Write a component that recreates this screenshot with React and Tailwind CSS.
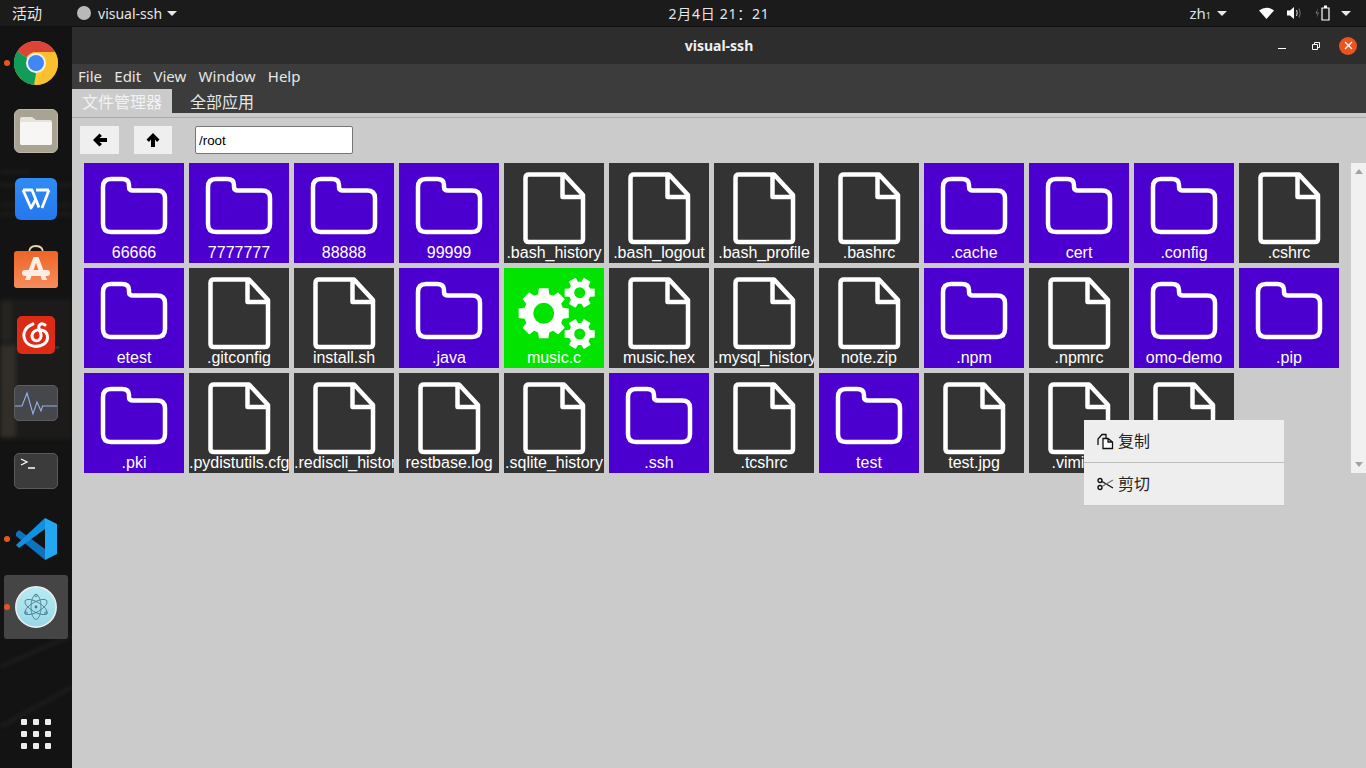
import React from 'react';

const files = [
  ['66666', 'd'], ['7777777', 'd'], ['88888', 'd'], ['99999', 'd'], ['.bash_history', 'f'], ['.bash_logout', 'f'],
  ['.bash_profile', 'f'], ['.bashrc', 'f'], ['.cache', 'd'], ['cert', 'd'], ['.config', 'd'], ['.cshrc', 'f'],
  ['etest', 'd'], ['.gitconfig', 'f'], ['install.sh', 'f'], ['.java', 'd'], ['music.c', 'x'], ['music.hex', 'f'],
  ['.mysql_history', 'f'], ['note.zip', 'f'], ['.npm', 'd'], ['.npmrc', 'f'], ['omo-demo', 'd'], ['.pip', 'd'],
  ['.pki', 'd'], ['.pydistutils.cfg', 'f'], ['.rediscli_history', 'f'], ['restbase.log', 'f'], ['.sqlite_history', 'f'], ['.ssh', 'd'],
  ['.tcshrc', 'f'], ['test', 'd'], ['test.jpg', 'f'], ['.viminfo', 'f'], ['.wget-hsts', 'f'],
];

const FolderIcon = () => (
  <svg width="100" height="80" viewBox="0 0 100 80" fill="none" stroke="white" strokeWidth="4.5">
    <path d="M27 16H38Q45 16 45 22V24Q45 27.5 49 27.5H73Q81 27.5 81 35V61Q81 69 73 69H27Q19 69 19 61V24Q19 16 27 16Z" />
  </svg>
);

const FileIcon = () => (
  <svg width="100" height="85" viewBox="0 0 100 85" fill="none" stroke="white" strokeWidth="4.5" strokeLinejoin="round">
    <path d="M25 11.5H60L79 32V76Q79 79 76 79H25Q21.5 79 21.5 76V15Q21.5 11.5 25 11.5ZM58.5 11.5V34H79" />
  </svg>
);

// builds a gear outline with a round hole
const gearPath = (cx, cy, r, hole, teeth, rootRatio) => {
  const root = r * rootRatio;
  const s = (Math.PI * 2) / teeth;
  const pts = [];
  for (let i = 0; i < teeth; i++) {
    const a = i * s;
    [[-0.36, root], [-0.24, r], [0.24, r], [0.36, root]].forEach(([k, rad]) => {
      const t = a + k * s;
      pts.push(`${(cx + Math.cos(t) * rad).toFixed(2)} ${(cy + Math.sin(t) * rad).toFixed(2)}`);
    });
  }
  return `M${pts.join('L')}ZM${cx - hole} ${cy}a${hole} ${hole} 0 1 0 ${hole * 2} 0a${hole} ${hole} 0 1 0 ${-hole * 2} 0Z`;
};

const GearsIcon = () => (
  <svg width="100" height="85" viewBox="0 0 100 85" fill="white" fillRule="evenodd">
    <path d={gearPath(39.7, 45.3, 25.5, 10.5, 8, 0.78)} />
    <path d={gearPath(75.7, 24.7, 15.5, 5.5, 6, 0.72)} />
    <path d={gearPath(75.7, 66, 15.5, 5.5, 6, 0.72)} />
  </svg>
);

const Tile = ({ name, type }) => {
  const bg = type === 'd' ? 'bg-[#4b00cf]' : type === 'x' ? 'bg-[#00e400]' : 'bg-[#333333]';
  return (
    <div className={`w-[100px] h-[100px] flex flex-col overflow-hidden ${bg}`}>
      <div className="h-[80px] shrink-0">
        {type === 'd' && <FolderIcon />}
        {type === 'f' && <FileIcon />}
        {type === 'x' && <GearsIcon />}
      </div>
      <div className="mt-auto h-[20px] leading-[20px] text-[16px] text-white text-center whitespace-nowrap">{name}</div>
    </div>
  );
};

const Caret = ({ className = '' }) => (
  <span className={`inline-block w-0 h-0 border-x-[5px] border-x-transparent border-t-[5px] border-t-[#e8e8e8] ${className}`} />
);

const TopBar = () => (
  <div className="relative z-10 h-[27px] shrink-0 grid grid-cols-[1fr_auto_1fr] items-center bg-[#1b1b1b] text-[14px] text-[#e6e6e6] border-b border-[#111]">
    <div className="flex items-center">
      <span className="ml-[12px] text-[15px]">活动</span>
      <span className="ml-[35px] w-[14px] h-[14px] rounded-full bg-[#b9b9b9]" />
      <span className="ml-[7px]">visual-ssh</span>
      <Caret className="ml-[5px]" />
    </div>
    <div className="ml-[72px] text-[14px] tracking-[0.75px]">2月4日 21：21</div>
    <div className="flex items-center justify-end pr-[15px]">
      <span className="text-[15px] text-[#d7e4f0]">zh<span className="text-[9px]">1</span></span>
      <Caret className="ml-[6px] mr-[32px]" />
      <svg width="15" height="12" viewBox="0 0 15 12" fill="white"><path d="M0 3.5Q7.5-2 15 3.5L7.5 12Z" /></svg>
      <svg className="ml-[13px]" width="15" height="14" viewBox="0 0 15 14" fill="none"><path d="M0 4.5H3L7 1V13L3 9.5H0Z" fill="white" /><path d="M9.5 4Q11 7 9.5 10" stroke="#ddd" /><path d="M12 2.5Q14.5 7 12 11.5" stroke="#777" /></svg>
      <svg className="ml-[13px]" width="15" height="16" viewBox="0 0 15 16" fill="none"><path d="M3 3L0.5 8.5H2.5L1.5 13L4 7.5H2Z" fill="#777" /><path d="M7 3H14V15H7Z" stroke="white" strokeWidth="1.2" /><path d="M9 0.5H12V3H9Z" fill="white" /></svg>
      <Caret className="ml-[11px]" />
    </div>
  </div>
);

const ChromeIcon = () => (
  <svg width="44" height="44" viewBox="0 0 44 44">
    <circle cx="22" cy="22" r="22" fill="#ffc931" />
    <path d="M22 0A22 22 0 0 1 41.05 11H22A11 11 0 0 0 12.5 16.5L3.4 10.2A22 22 0 0 1 22 0Z" fill="#db4437" />
    <path d="M3.4 10.2L12.5 16.5L22 33L22 44A22 22 0 0 1 3.4 10.2ZM22 33L20 44H22Z" fill="#0f9d58" />
    <path d="M41.05 11H22L31 27L21 44A22 22 0 0 0 41.05 11Z" fill="#fbc02d" />
    <circle cx="22" cy="22" r="10" fill="#f3f3f3" />
    <circle cx="22" cy="22" r="8" fill="#4285f4" />
  </svg>
);

const FilesIcon = () => (
  <div className="w-[44px] h-[44px] rounded-[6px] bg-[#a9a393] border border-[#bdb8aa] flex items-center justify-center">
    <svg width="32" height="28" viewBox="0 0 32 28">
      <path d="M2 0H12L16 3H30Q32 3 32 5V26Q32 28 30 28H2Q0 28 0 26V2Q0 0 2 0Z" fill="#e6e3db" />
      <path d="M2 5H30Q32 5 32 7V26Q32 28 30 28H2Q0 28 0 26V7Q0 5 2 5Z" fill="#f7f6f4" />
    </svg>
  </div>
);

const WpsIcon = () => (
  <div className="w-[42px] h-[42px] rounded-[6px] bg-gradient-to-b from-[#2e8cf4] to-[#2577ee] flex items-center justify-center">
    <svg width="30" height="22" viewBox="0 0 30 22" fill="none" stroke="white" strokeWidth="2.8" strokeLinejoin="round">
      <path d="M2 2H11L18 19.5M2 2L10 20L15 11M28 2L21 20M28 2H15" />
    </svg>
  </div>
);

const StoreIcon = () => (
  <svg width="44" height="44" viewBox="0 0 44 44">
    <defs>
      <linearGradient id="bag" x1="0" y1="0" x2="0" y2="1">
        <stop offset="0" stopColor="#ee6426" />
        <stop offset="1" stopColor="#f58d5c" />
      </linearGradient>
    </defs>
    <path d="M15 8Q15 1 22 1Q29 1 29 8" fill="none" stroke="#ecd3ae" strokeWidth="1.8" />
    <path d="M3 6H41Q44 6 44 9V40Q44 43 41 43H3Q0 43 0 40V9Q0 6 3 6Z" fill="url(#bag)" />
    <path d="M19.5 12H24.5L33 35H28L22 18L16 35H11Z" fill="#fdeee4" />
    <rect x="8" y="25" width="28" height="6" rx="3" fill="#fdeee4" />
  </svg>
);

const NeteaseIcon = () => (
  <div className="w-[38px] h-[38px] rounded-[5px] bg-[#dd2c16] flex items-center justify-center">
    <svg width="30" height="30" viewBox="0 0 30 30" fill="none" stroke="white" strokeWidth="3" strokeLinecap="round">
      <path d="M12 4C4 7 1 14 4 20C7 27 17 28 23 24C29 19 27 11 20 10C15 9 11 12 11 16C11 20 15 22 18 20C21 18 20 13 18 9C17 5 20 2 24 5" />
    </svg>
  </div>
);

const MonitorIcon = () => (
  <div className="w-[44px] h-[36px] rounded-[5px] bg-[#46474b] border border-[#5d5d5f] flex items-center overflow-hidden">
    <svg className="shrink-0" width="44" height="36" viewBox="0 0 44 36" fill="none" stroke="#95b0ea" strokeWidth="1.1">
      <path d="M-1 21H7L12 8L18 29L22 17L26 26L27.5 21H44" />
    </svg>
  </div>
);

const TerminalIcon = () => (
  <div className="w-[44px] h-[36px] rounded-[5px] bg-[#3b3b3b] border border-[#5a5a5a] relative">
    <svg width="24" height="16" viewBox="0 0 24 16" fill="none" stroke="white" strokeWidth="1.3">
      <path d="M6 5L12 8L6 11M13 14H20" />
    </svg>
  </div>
);

const VscodeIcon = () => (
  <svg width="42" height="42" viewBox="0 0 42 42">
    <path d="M1 15L4 12L30 31V42L1 18Z" fill="#0f73bb" />
    <path d="M30 0V11L4 30L1 27Z" fill="#1290e0" />
    <path d="M30 0L42 6V36L30 42Z" fill="#22a7f0" />
  </svg>
);

const ElectronIcon = () => (
  <svg width="42" height="42" viewBox="0 0 42 42" fill="none">
    <defs>
      <linearGradient id="atom" x1="0" y1="0" x2="0" y2="1">
        <stop offset="0" stopColor="#b8ebf3" />
        <stop offset="1" stopColor="#98d7e6" />
      </linearGradient>
    </defs>
    <circle cx="21" cy="21" r="20.2" fill="url(#atom)" stroke="#efefef" strokeWidth="1.5" />
    <g stroke="#47788a" strokeWidth="0.8">
      <ellipse cx="21" cy="21" rx="12.5" ry="5" transform="rotate(30 21 21)" />
      <ellipse cx="21" cy="21" rx="12.5" ry="5" transform="rotate(90 21 21)" />
      <ellipse cx="21" cy="21" rx="12.5" ry="5" transform="rotate(150 21 21)" />
      <circle cx="21" cy="9.5" r="1.3" />
      <circle cx="11" cy="27" r="1.3" />
      <circle cx="31" cy="27" r="1.3" />
    </g>
    <circle cx="21" cy="21" r="1.4" fill="#47788a" />
  </svg>
);

const Dot = () => <span className="absolute left-[4px] top-1/2 -mt-[3px] w-[6px] h-[6px] rounded-full bg-[#e95420]" />;

const DockSlot = ({ children, dot, active }) => (
  <div className="relative h-[68px] flex items-center justify-center">
    {active && <div className="absolute left-[4px] top-[2px] w-[64px] h-[64px] rounded-[3px] bg-[#454545]" />}
    {dot && <Dot />}
    <div className="relative">{children}</div>
  </div>
);

const Dock = () => (
  <div className="relative w-[72px] shrink-0 flex flex-col pt-[2px] bg-[#131313] overflow-hidden">
    {/* wallpaper seen through the dock */}
    <svg className="absolute left-0 top-0 blur-[2px]" width="72" height="741" viewBox="0 0 72 741">
      <rect x="-6" y="272" width="84" height="140" fill="#1c1b19" />
      <rect x="-6" y="318" width="22" height="92" fill="#322e27" />
      <rect x="-6" y="274" width="18" height="40" fill="#262420" />
      <path d="M0 145H30M0 158H72M0 178H72M0 187H72" stroke="#2c2a24" strokeWidth="1.5" />
      <path d="M0 640L72 608M0 700L72 660" stroke="#2e2e2e" strokeWidth="1.5" />
    </svg>
    <span className="absolute left-[39px] top-[306px] text-[10px] leading-[10px] text-[#4d4d4d] font-['Liberation_Sans',sans-serif]">2</span>
    <span className="absolute left-[39px] top-[317px] text-[6px] leading-[6px] text-[#4a4a4a] font-['Liberation_Sans',sans-serif]">Avenue</span>
    <DockSlot dot><ChromeIcon /></DockSlot>
    <DockSlot><FilesIcon /></DockSlot>
    <DockSlot><WpsIcon /></DockSlot>
    <DockSlot><StoreIcon /></DockSlot>
    <DockSlot><NeteaseIcon /></DockSlot>
    <DockSlot><MonitorIcon /></DockSlot>
    <DockSlot><TerminalIcon /></DockSlot>
    <DockSlot dot><VscodeIcon /></DockSlot>
    <DockSlot dot active><ElectronIcon /></DockSlot>
    <div className="relative mt-auto mb-[19px] mx-auto grid grid-cols-3 gap-[6px]">
      {Array.from({ length: 9 }).map((_, i) => (
        <span key={i} className="w-[6px] h-[6px] rounded-[1px] bg-[#ececec]" />
      ))}
    </div>
  </div>
);

const ContextMenu = () => (
  <div className="absolute left-[1012px] top-[393px] w-[200px] bg-[#eeeeee] text-[16px] text-[#222] border-b border-[#c4c4c4]">
    <div className="h-[43px] flex items-center pl-[13px] border-b border-[#bdbdbd]">
      <svg width="17" height="17" viewBox="0 0 17 17" fill="none" stroke="#111" strokeWidth="1.3">
        <path d="M1 12V6L5 1.5H9V5" />
        <path d="M6 5.5H11L15.5 9V15.5H6ZM11 5.5V9H15.5" fill="#fff" />
      </svg>
      <span className="ml-[4px]">复制</span>
    </div>
    <div className="h-[42px] flex items-center pl-[13px]">
      <svg width="17" height="14" viewBox="0 0 17 14" fill="none" stroke="#111" strokeWidth="1.4">
        <circle cx="3" cy="3.5" r="2" />
        <circle cx="3" cy="10.5" r="2" />
        <path d="M5 4.5L16 11" />
        <path d="M5 9.5L16 3" stroke="#777" />
      </svg>
      <span className="ml-[4px]">剪切</span>
    </div>
  </div>
);

export default function App() {
  return (
    <div className="w-[1366px] h-[768px] flex flex-col overflow-hidden font-['Noto_Sans','Noto_Sans_CJK_SC',sans-serif]">
      <TopBar />
      <div className="flex-1 flex min-h-0">
        <Dock />
        <div className="relative flex-1 flex flex-col bg-[#cbcbcb]">
          <div className="h-[37px] shrink-0 grid grid-cols-[1fr_auto_1fr] items-center bg-[#2d2d2d] text-[#f0f0f0]">
            <span />
            <span className="text-[14px] font-bold">visual-ssh</span>
            <div className="flex items-center justify-end pr-[9px]">
              <span className="w-[8px] h-px bg-white mt-[6px]" />
              <svg className="ml-[26px]" width="8" height="8" viewBox="0 0 8 8" fill="none" stroke="white"><path d="M0.5 2.5H5.5V7.5H0.5ZM2.5 2V0.5H7.5V5.5H6" /></svg>
              <span className="ml-[19px] w-[18px] h-[18px] rounded-full bg-[#e95420] flex items-center justify-center">
                <svg width="9" height="9" viewBox="0 0 9 9" stroke="white" strokeWidth="1.2"><path d="M1 1L8 8M8 1L1 8" /></svg>
              </span>
            </div>
          </div>
          <div className="h-[25px] shrink-0 flex items-center gap-[12.3px] pl-[6px] bg-[#3c3c3c] text-[15px] text-[#e6e6e6]">
            <span>File</span><span>Edit</span><span>View</span><span>Window</span><span>Help</span>
          </div>
          <div className="h-[28px] shrink-0 flex bg-[#3c3c3c] border-b-[4px] border-[#cbcbcb] text-[16px]">
            <div className="w-[100px] h-[24px] leading-[26px] text-center bg-[#cbcbcb] text-[#f2f2f2]">文件管理器</div>
            <div className="ml-[18px] leading-[26px] text-[#e6e6e6]">全部应用</div>
          </div>
          <div className="h-[46px] shrink-0 flex items-start pl-[8px] pt-[8px] border-t border-[#aaaaaa]">
            <button className="w-[39px] h-[28px] bg-[#efefef] flex items-center justify-center">
              <svg width="14" height="14" viewBox="0 0 14 14" fill="black"><path d="M0 7L6.5 0.5L9 3L6.5 5H14V9H6.5L9 11L6.5 13.5Z" /></svg>
            </button>
            <button className="ml-[15px] w-[38px] h-[28px] bg-[#efefef] flex items-center justify-center">
              <svg width="14" height="14" viewBox="0 0 14 14" fill="black"><path d="M7 0L13.5 6.5L11 9L9 6.5V14H5V6.5L3 9L0.5 6.5Z" /></svg>
            </button>
            <input readOnly value="/root" className="ml-[23px] w-[158px] h-[28px] bg-white border border-[#767676] rounded-[2px] px-[3px] text-[13.33px] text-black font-['Liberation_Sans',sans-serif] outline-none" />
          </div>
          <div className="flex pl-[12px]">
            <div className="flex-1 h-[310px] grid grid-cols-[repeat(12,100px)] auto-rows-[100px] gap-[5px] font-['Liberation_Sans',sans-serif]">
              {files.map(([name, type]) => <Tile key={name} name={name} type={type} />)}
            </div>
            <div className="w-[15px] h-[310px] bg-[#f1f1f1] flex flex-col items-center justify-between py-[6px]">
              <span className="w-0 h-0 border-x-[4px] border-x-transparent border-b-[5px] border-b-[#a3a3a3]" />
              <span className="w-0 h-0 border-x-[4px] border-x-transparent border-t-[5px] border-t-[#a3a3a3]" />
            </div>
          </div>
          <ContextMenu />
        </div>
      </div>
    </div>
  );
}
